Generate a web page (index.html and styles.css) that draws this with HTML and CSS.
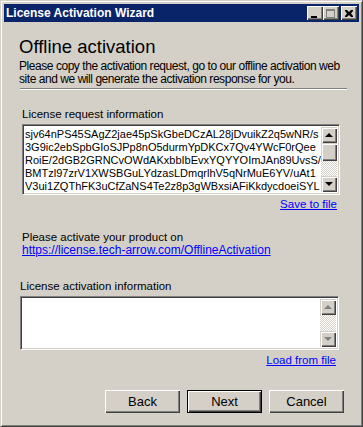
FILE: index.html
```html
<!DOCTYPE html>
<html lang="en">
<head>
    <meta charset="UTF-8">
    <title>License Activation Wizard</title>
    <link rel="stylesheet" href="styles.css">
</head>
<body>
    <div class="window">
        <div class="titlebar">
            <span class="title">License Activation Wizard</span>
            <div class="title-buttons">
                <span class="tbtn tbtn-min"><i></i></span>
                <span class="tbtn tbtn-max"><i></i></span>
                <span class="tbtn tbtn-close">
                    <svg width="8" height="7" viewBox="0 0 8 7"><path d="M0 0h2l2 2 2-2h2v1l-2 2.5 2 2.5v1h-2l-2-2-2 2h-2v-1l2-2.5-2-2.5z" fill="#000"/></svg>
                </span>
            </div>
        </div>

        <div class="content">
            <h1>Offline activation</h1>
            <p class="intro">Please copy the activation request, go to our offline activation web<br>site and we will generate the activation response for you.</p>
            <div class="separator"></div>

            <div class="section request">
                <div class="label">License request information</div>
                <div class="textbox tall">
                    <div class="text">sjv64nPS45SAgZ2jae45pSkGbeDCzAL28jDvuikZ2q5wNR/s
3G9ic2ebSpbGIoSJPp8nO5durmYpDKCx7Qv4YWcF0rQee
RoiE/2dGB2GRNCvOWdAKxbbIbEvxYQYYOImJAn89UvsS/
BMTzl97zrV1XWSBGuLYdzasLDmqrlhV5qNrMuE6YV/uAt1
V3ui1ZQThFK3uCfZaNS4Te2z8p3gWBxsiAFiKkdycdoeiSYL</div>
                    <div class="scrollbar">
                        <span class="sbtn"><i class="up"></i></span>
                        <span class="thumb"></span>
                        <span class="track"></span>
                        <span class="sbtn"><i class="down"></i></span>
                    </div>
                </div>
                <div class="link-row"><a href="#">Save to file</a></div>
            </div>

            <div class="section activate">
                <div class="label">Please activate your product on</div>
                <a href="#" class="url">https://license.tech-arrow.com/OfflineActivation</a>
            </div>

            <div class="section response">
                <div class="label">License activation information</div>
                <div class="textbox short">
                    <div class="text"></div>
                    <div class="scrollbar disabled">
                        <span class="sbtn"><i class="up"></i></span>
                        <span class="track"></span>
                        <span class="sbtn"><i class="down"></i></span>
                    </div>
                </div>
                <div class="link-row"><a href="#">Load from file</a></div>
            </div>

            <div class="buttons">
                <button class="btn">Back</button>
                <button class="btn default">Next</button>
                <button class="btn">Cancel</button>
            </div>
        </div>
    </div>
</body>
</html>
```

FILE: styles.css
```css
body {
    margin: 0;
    background: #d4d0c8;
    font-family: 'Liberation Sans', Arial, sans-serif;
    color: #000;
}
.window {
    width: 363px;
    height: 427px;
    box-sizing: border-box;
    padding: 2px;
    background: #d4d0c8;
    border-top: 1px solid #d4d0c8;
    border-left: 1px solid #d4d0c8;
    border-right: 1px solid #404040;
    border-bottom: 1px solid #404040;
    box-shadow: inset 1px 1px 0 #fff, inset -1px -1px 0 #808080;
    display: flex;
    flex-direction: column;
}
.titlebar {
    height: 18px;
    margin: 1px 1px 0 1px;
    background: #0a246a;
    display: flex;
    align-items: center;
    justify-content: space-between;
    padding: 0 2px 0 2px;
}
.title {
    color: #fff;
    font-weight: bold;
    font-size: 12px;
}
.title-buttons {
    display: flex;
    align-items: center;
}
.tbtn {
    width: 16px;
    height: 14px;
    box-sizing: border-box;
    background: #d4d0c8;
    box-shadow: inset 1px 1px 0 #fff, inset -1px -1px 0 #404040, inset -2px -2px 0 #808080;
    display: flex;
    align-items: center;
    justify-content: center;
}
.tbtn-max {
    margin-right: 2px;
}
.tbtn-min i {
    width: 6px;
    height: 2px;
    background: #000;
    margin-top: 7px;
    margin-right: 2px;
}
.tbtn-max i {
    width: 9px;
    height: 9px;
    box-sizing: border-box;
    border: 1px solid #808080;
    border-top-width: 2px;
    margin-right: 1px;
}
.tbtn-close svg {
    margin-right: 1px;
}
.content {
    flex: 1;
    padding: 0 12px 0 16px;
    display: flex;
    flex-direction: column;
}
h1 {
    font-size: 18.5px;
    font-weight: normal;
    margin: 13px 0 0 0;
    line-height: 23px;
}
.intro {
    font-size: 12px;
    line-height: 13px;
    letter-spacing: -0.45px;
    margin: 2px 0 0 0;
    white-space: nowrap;
}
.separator {
    height: 1px;
    margin: 2px 1px 0 1px;
    background: #808080;
    border-bottom: 1px solid #fff;
}
.label {
    font-size: 11.5px;
    line-height: 14px;
}
.request {
    margin: 17px 0 0 3px;
}
.textbox {
    margin-top: 3px;
    width: 318px;
    box-sizing: border-box;
    border: 1px solid;
    border-color: #808080 #fff #fff #808080;
    display: flex;
    background: #fff;
    box-shadow: inset 1px 1px 0 #404040, inset -1px -1px 0 #d4d0c8;
    padding: 2px;
}
.textbox.tall {
    height: 71px;
}
.textbox.short {
    height: 54px;
    width: 319px;
}
.text {
    flex: 1;
    white-space: pre;
    overflow: hidden;
    font-size: 11px;
    line-height: 13px;
    padding: 1px 0 0 0;
}
.scrollbar {
    width: 16px;
    display: flex;
    flex-direction: column;
}
.sbtn, .thumb {
    height: 16px;
    flex: none;
    box-sizing: border-box;
    background: #d4d0c8;
    box-shadow: inset 1px 1px 0 #d4d0c8, inset 2px 2px 0 #fff, inset -1px -1px 0 #404040, inset -2px -2px 0 #808080;
    display: flex;
    align-items: center;
    justify-content: center;
}
.thumb {
    height: 18px;
}
.track {
    flex: 1;
    background: repeating-conic-gradient(#fff 0 25%, #d4d0c8 0 50%) 0 0 / 2px 2px;
}
.sbtn i {
    width: 0;
    height: 0;
    border-left: 4px solid transparent;
    border-right: 4px solid transparent;
}
.sbtn i.up {
    border-bottom: 4px solid #000;
    margin-bottom: 1px;
}
.sbtn i.down {
    border-top: 4px solid #000;
}
.disabled .sbtn i.up {
    border-bottom-color: #808080;
}
.disabled .sbtn i.down {
    border-top-color: #808080;
}
.link-row {
    display: flex;
    justify-content: flex-end;
    margin-top: 2px;
    padding-right: 11px;
    font-size: 11.5px;
    line-height: 14px;
}
a {
    color: #0000ff;
}
.activate {
    margin: 20px 0 0 3px;
    display: flex;
    flex-direction: column;
    align-items: flex-start;
}
.activate .label {
    line-height: 13px;
}
.url {
    font-size: 12px;
    line-height: 13px;
}
.response {
    margin: 22px 0 0 1px;
}
.response .link-row {
    margin-top: 3px;
    padding-right: 12px;
}
.buttons {
    display: flex;
    justify-content: flex-end;
    gap: 7px;
    margin: auto 4px 11px 0;
}
.btn {
    width: 75px;
    height: 23px;
    box-sizing: border-box;
    border: none;
    background: #d4d0c8;
    box-shadow: inset 1px 1px 0 #fff, inset -1px -1px 0 #404040, inset -2px -2px 0 #808080;
    font-family: 'Liberation Sans', Arial, sans-serif;
    font-size: 13px;
    color: #000;
    padding: 0;
}
.btn.default {
    box-shadow: inset 0 0 0 1px #000, inset 2px 2px 0 #fff, inset -2px -2px 0 #404040, inset -3px -3px 0 #808080;
}
```
